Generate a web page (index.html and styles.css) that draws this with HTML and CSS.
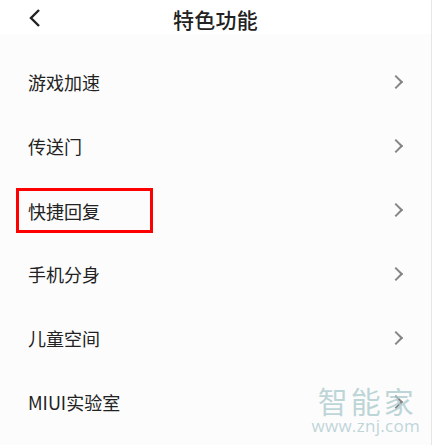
FILE: index.html
```html
<html>
  <head>
    <meta charset="utf-8" />
    <link rel="stylesheet" href="styles.css">
    <title>特色功能</title>
  </head>
  <body>
    <div class="screen">
      <div class="topbar">
        <span class="back">
          <svg width="14" height="20" viewBox="0 0 14 20">
            <path d="M11 2 L3 10 L11 18" fill="none" stroke="#222" stroke-width="2.4" />
          </svg>
        </span>
        <span class="title">特色功能</span>
      </div>
      <ul class="menu">
        <li class="item"><span class="label">游戏加速</span><span class="arrow"></span></li>
        <li class="item"><span class="label">传送门</span><span class="arrow"></span></li>
        <li class="item"><span class="label marked">快捷回复</span><span class="arrow"></span></li>
        <li class="item"><span class="label">手机分身</span><span class="arrow"></span></li>
        <li class="item"><span class="label">儿童空间</span><span class="arrow"></span></li>
        <li class="item"><span class="label">MIUI实验室</span><span class="arrow"></span></li>
      </ul>
      <div class="watermark">
        <div class="wm-name">智能家</div>
        <div class="wm-url">www.znj.com</div>
      </div>
    </div>
  </body>
</html>
```

FILE: styles.css
```css
body {
  margin: 0;
  font-family: "Noto Sans CJK SC", "Noto Sans", sans-serif;
  background-color: #fcfcfc;
  color: #222;
}
.screen {
  position: relative;
  height: 445px;
  overflow: hidden;
  border-right: 1px solid #e6e6e6;
}
.topbar {
  height: 30px;
  padding-top: 4px;
  background-color: #fff;
  display: flex;
  align-items: center;
  justify-content: center;
  position: relative;
}
.back {
  position: absolute;
  left: 28px;
  top: 8px;
}
.title {
  font-size: 21px;
  font-weight: 500;
  letter-spacing: 0.3px;
  line-height: 28px;
}
.menu {
  list-style: none;
  margin: 0;
  padding: 16px 0 0 0;
}
.item {
  height: 64px;
  display: flex;
  align-items: center;
  justify-content: space-between;
  padding: 0 30px 0 28px;
}
.label {
  font-size: 18px;
  line-height: 24px;
}
.marked {
  margin-left: -12px;
  padding: 8px 50px 7px 9px;
  border: 3px solid #ff0000;
}
.arrow {
  width: 8px;
  height: 8px;
  border-top: 2px solid #858585;
  border-right: 2px solid #858585;
  transform: rotate(45deg);
}
.watermark {
  position: absolute;
  right: 11px;
  bottom: 11px;
  color: rgba(170, 200, 205, 0.75);
  text-align: center;
}
.wm-name {
  font-size: 30px;
  line-height: 36px;
  letter-spacing: 3px;
  margin-right: -3px;
}
.wm-url {
  font-family: "Open Sans", sans-serif;
  font-size: 17px;
  line-height: 16px;
  letter-spacing: 0.3px;
}
```
